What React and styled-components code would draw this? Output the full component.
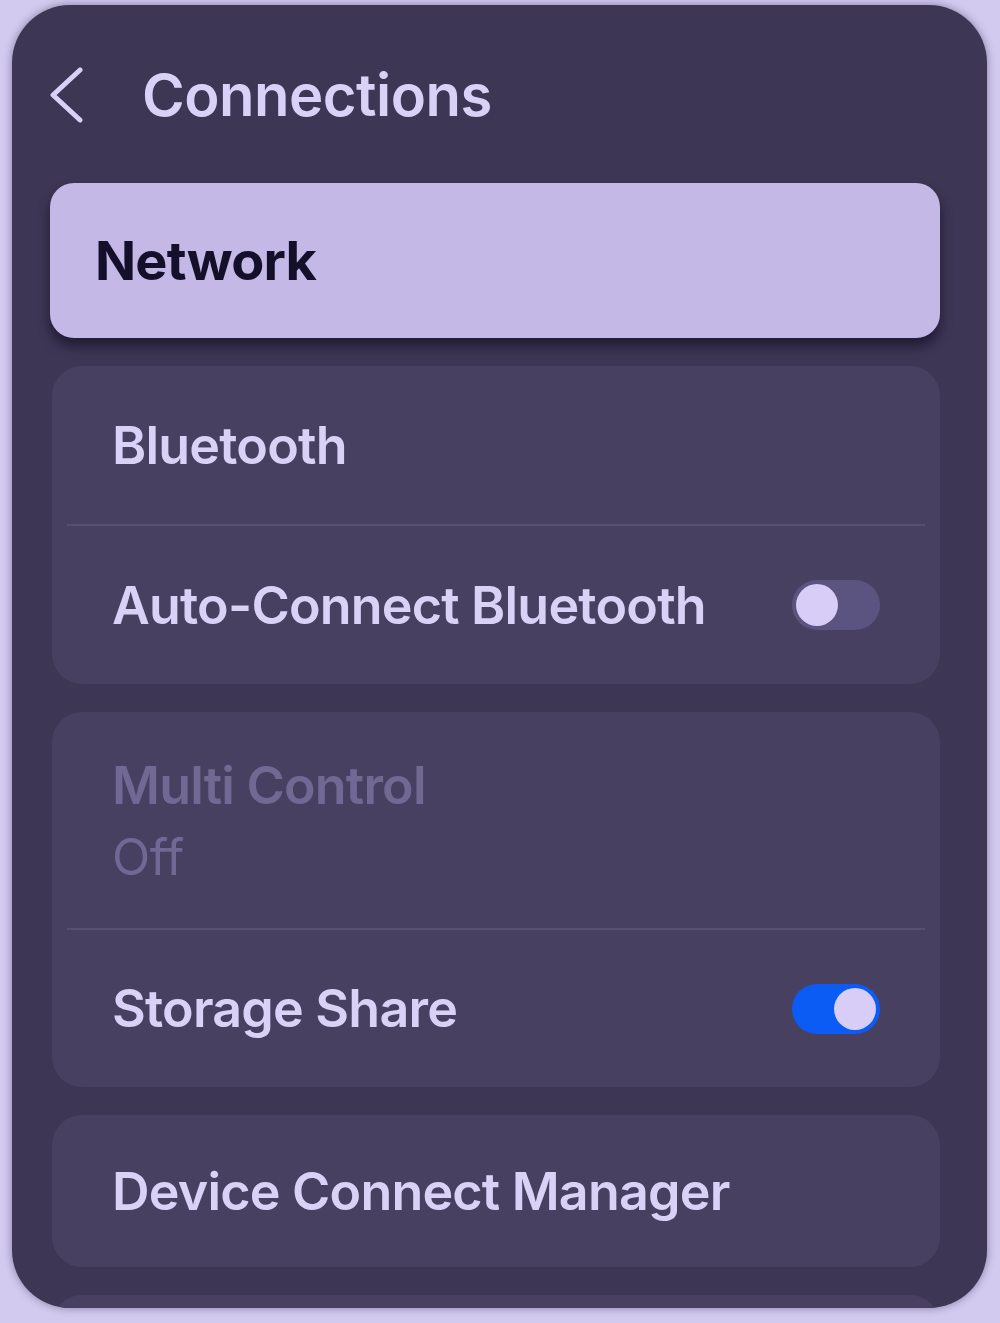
import styled, { createGlobalStyle } from 'styled-components'

const GlobalStyle = createGlobalStyle`
  html, body {
    margin: 0;
    padding: 0;
    background: #d3caef;
  }
  body {
    font-family: Inter, "Open Sans", "Liberation Sans", sans-serif;
  }
`

const colors = {
  page: '#d3caef',
  panel: '#3d3654',
  group: '#474061',
  selected: '#c4b9e6',
  text: '#d9d1f6',
  dim: '#716893',
  divider: '#57506f',
  trackOff: '#5b5380',
  knob: '#d8cdf6',
  trackOn: '#0b5cf5',
}

const Screen = styled.div`
  height: 1323px;
  padding: 5px 13px 15px 12px;
  box-sizing: border-box;
  overflow: hidden;
`

const Panel = styled.div`
  height: 100%;
  background: ${colors.panel};
  border-radius: 58px;
  box-shadow: 0 0 8px rgba(40, 30, 70, 0.45);
  overflow: hidden;
  display: flex;
  flex-direction: column;
  padding: 0 47px 0 40px;
  box-sizing: border-box;
`

const Header = styled.div`
  flex-shrink: 0;
  display: flex;
  align-items: center;
  gap: 58px;
  height: 90px;
  margin: 45px 0 43px -2px;
`

const BackIcon = styled.svg`
  width: 34px;
  height: 56px;
  flex-shrink: 0;
`

const Title = styled.h1`
  margin: 0;
  font-size: 58px;
  font-weight: 600;
  letter-spacing: -0.5px;
  color: ${colors.text};
`

const List = styled.div`
  flex-shrink: 0;
  display: flex;
  flex-direction: column;
  gap: 28px;
`

const SelectedCard = styled.div`
  height: 155px;
  margin: 0 0 0 -2px;
  padding: 0 45px;
  display: flex;
  align-items: center;
  border-radius: 24px;
  background: ${colors.selected};
  box-shadow: 0 8px 12px rgba(10, 5, 25, 0.55);
  font-size: 54px;
  font-weight: 700;
  letter-spacing: -0.8px;
  color: #15102a;
`

const Group = styled.div`
  background: ${colors.group};
  border-radius: 30px;
  display: flex;
  flex-direction: column;
  padding: 0 15px;
`

const Row = styled.div`
  height: ${({ $height }) => $height || 157}px;
  display: flex;
  align-items: center;
  justify-content: space-between;
  padding: 0 45px 0 45px;
  border-top: ${({ $divided }) => ($divided ? `2px solid ${colors.divider}` : 'none')};
`

const Label = styled.div`
  display: flex;
  flex-direction: column;
  gap: 10px;
`

const RowTitle = styled.span`
  font-size: 52px;
  font-weight: 600;
  letter-spacing: -0.8px;
  color: ${({ $disabled }) => ($disabled ? colors.dim : colors.text)};
`

const RowSub = styled.span`
  font-size: 50px;
  font-weight: 400;
  letter-spacing: -0.5px;
  color: ${colors.dim};
`

const Track = styled.div`
  width: 88px;
  height: 50px;
  border-radius: 25px;
  background: ${({ $on }) => ($on ? colors.trackOn : colors.trackOff)};
  display: flex;
  align-items: center;
  justify-content: ${({ $on }) => ($on ? 'flex-end' : 'flex-start')};
  padding: 0 4px;
  box-sizing: border-box;
  flex-shrink: 0;
`

const Knob = styled.div`
  width: 42px;
  height: 42px;
  border-radius: 50%;
  background: ${colors.knob};
`

function Toggle({ on }) {
  return (
    <Track $on={on}>
      <Knob />
    </Track>
  )
}

function App() {
  return (
    <>
      <GlobalStyle />
      <Screen>
        <Panel>
          <Header>
            <BackIcon viewBox="0 0 34 56">
              <polyline
                points="30,3 3,28 30,53"
                fill="none"
                stroke={colors.text}
                strokeWidth="5"
                strokeLinecap="round"
                strokeLinejoin="round"
              />
            </BackIcon>
            <Title>Connections</Title>
          </Header>

          <List>
            <SelectedCard>Network</SelectedCard>

            <Group>
              <Row $height={158}>
                <RowTitle>Bluetooth</RowTitle>
              </Row>
              <Row $height={158} $divided>
                <RowTitle>Auto-Connect Bluetooth</RowTitle>
                <Toggle on={false} />
              </Row>
            </Group>

            <Group>
              <Row $height={216}>
                <Label>
                  <RowTitle $disabled>Multi Control</RowTitle>
                  <RowSub>Off</RowSub>
                </Label>
              </Row>
              <Row $height={157} $divided>
                <RowTitle>Storage Share</RowTitle>
                <Toggle on />
              </Row>
            </Group>

            <Group>
              <Row $height={152}>
                <RowTitle>Device Connect Manager</RowTitle>
              </Row>
            </Group>

            <Group>
              <Row $height={152} />
            </Group>
          </List>
        </Panel>
      </Screen>
    </>
  )
}

export default App
